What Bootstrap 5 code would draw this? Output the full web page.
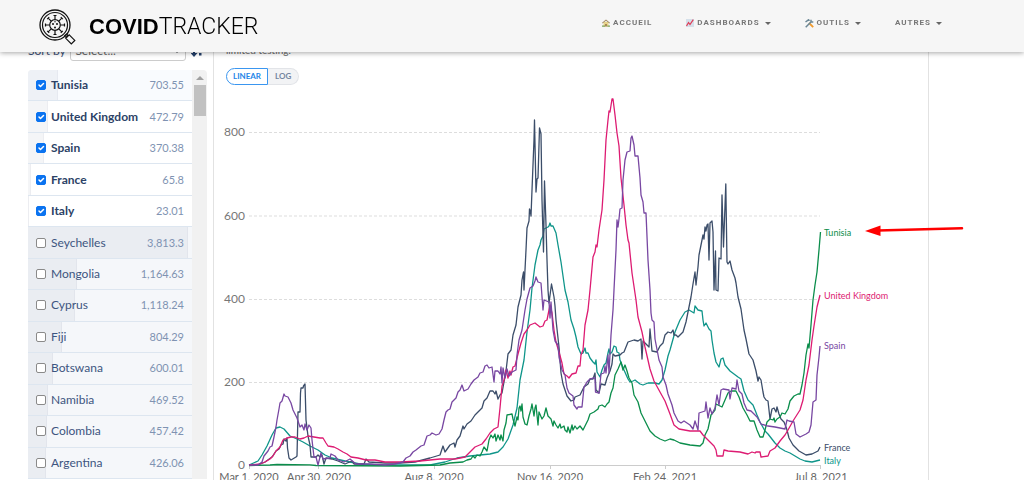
<!DOCTYPE html>
<html lang="fr">
<head>
<meta charset="utf-8">
<meta name="viewport" content="width=device-width, initial-scale=1">
<title>CovidTracker</title>
<link href="https://cdn.jsdelivr.net/npm/bootstrap@5.3.0/dist/css/bootstrap.min.css" rel="stylesheet">
<style>
  body { font-family: Lato, sans-serif; font-size: 12px; line-height: 16px; color: #3d5075; background: #fff; overflow: hidden; }
  .site-bar { height: 52px; padding: 2px 82px 0 39px; background: #f6f6f6; box-shadow: 0 1px 5px rgba(0,0,0,.35); }
  .brand-text { font: 700 22px/26px "Liberation Sans", Arial, sans-serif; color: #000; }
  .brand-text span { font: 300 23px/26px Roboto, sans-serif; }
  .site-menu { gap: 34px; }
  .site-menu .nav-link { display: flex; align-items: center; padding: 0; border: 0; background: none; font: 700 8px/12px Roboto, sans-serif; letter-spacing: 1px; color: #777; }
  .site-menu .nav-link svg { margin-right: 3px; }
  .site-menu .dropdown-toggle::after { margin-left: 5px; border-width: 3px; border-bottom: 0; border-top-color: #666; }
  .explorer { padding: 41px 95px 0 28px; }
  .side { width: 186px; padding-right: 6px; border-right: 1px solid #e2e2e2; }
  .sort-row { height: 20px; margin-bottom: 9px; }
  .sort-row select { width: 116px; height: 20px; padding: 0 4px; border: 1px solid #ccc; border-radius: 3px; font-size: 12px; line-height: 16px; color: #666; background-position: right 4px center; background-size: 8px; }
  .country-box { border-radius: 4px 4px 0 0; overflow: hidden; background: #f1f1f1; }
  .country-list { display: grid; grid-auto-rows: 1fr; height: 409px; width: 164px; }
  .country { position: relative; background: #f5f7fa; border-bottom: 1px solid #dde6f0; padding: 0 8px; }
  .country.picked { background: #fff; }
  .country.picked:first-child { background: #f9fbfe; }
  .country.picked label { font-weight: 700; color: #2c4266; }
  .country label { color: #3d5580; margin-left: 5px; }
  .country output { font-size: 11px; color: #7f93b2; }
  .country > * { position: relative; }
  .country .bar { position: absolute; left: 0; top: 0; bottom: 0; background: rgba(40,60,100,.05); border-right: 1px solid rgba(40,60,100,.04); }
  .country .form-check-input { width: 10px; height: 10px; margin: 0; border-color: #8a8a8a; border-radius: 2px; background-size: 10px; }
  .country .form-check-input:checked { background-color: #0b73f0; border-color: #0b73f0; }
  .scroll-track { width: 15px; padding: 6px 1px 0 2px; }
  .scroll-thumb { height: 31px; margin-top: 5px; background: #c1c1c1; }
  .chart-pane { border-right: 1px solid #e2e2e2; min-width: 0; }
  .chart-note { height: 20px; margin: 0 0 7px 12px; font-size: 10px; line-height: 18px; color: #666; }
  .scale-switch { margin-left: 12px; }
  .scale-switch button { height: 17px; padding: 0 7px; border: 1px solid #e2e4e8; background: #f2f3f5; font-size: 8px; line-height: 15px; font-weight: 700; color: #7385a0; }
  .scale-switch button:first-child { border-color: #3a96f0; background: #fff; color: #2485e8; border-radius: 9px 0 0 9px; padding: 0 6px; }
  .scale-switch button:last-child { border-left: 0; border-radius: 0 9px 9px 0; }
  .plot { display: block; width: 100%; overflow: visible; }
  .plot polyline { fill: none; stroke-width: 1.3; stroke-linejoin: round; }
  .axis { font-size: 12px; fill: #777; }
  .dates { font-size: 11px; fill: #666; text-anchor: middle; }
  .names { font-size: 9px; }
</style>
</head>
<body>
<header class="navbar fixed-top flex-nowrap site-bar">
  <a href="#" class="d-flex align-items-center text-decoration-none">
    <svg width="38" height="36" viewBox="0 0 38 36" fill="none" stroke="#111">
      <circle cx="16" cy="16" r="15" stroke-width="1.300"/><circle cx="16" cy="16" r="12.500" stroke-width="1.200"/>
      <circle cx="16" cy="16" r="5.300" stroke-width="1.200"/>
      <path stroke-width="1.200" d="M16 10.500v-4M16 21.500v4M10.500 16h-4M21.500 16h4M12.200 12.200l-3-3M19.800 12.200l3-3M12.200 19.800l-3 3M19.800 19.800l3 3M14.500 6.500h3M14.500 25.500h3M6.500 14.500v3M25.500 14.500v3M8.200 10.200l2-2M21.800 8.200l2 2M8.200 21.800l2 2M21.800 23.800l2-2"/>
      <g fill="#111" stroke="none"><circle cx="14" cy="15" r="1"/><circle cx="18" cy="15" r="1"/><circle cx="16" cy="18.500" r="1"/><circle cx="16" cy="12.800" r=".7"/></g>
      <path stroke-width="1.200" d="M25.500 27l2-2 1.500 1.500-2 2zM26.800 29.300l3.400-3.400 5.600 5.500-3.500 3.600z"/>
    </svg>
    <span class="brand-text ms-2 ps-1">COVID<span>TRACKER</span></span>
  </a>
  <nav class="d-flex site-menu pb-2">
    <a class="nav-link" href="#"><svg width="8" height="8" viewBox="0 0 8 8"><path fill="#e8d48a" d="M1.500 3h5v4.500h-5z"/><path fill="#a08a60" d="M0 3.800L4 .4l4 3.400-.5.600L4 1.700.5 4.400z"/><path fill="#8c6b42" d="M3.300 5h1.400v2.500H3.300z"/><path fill="#7da35a" d="M0 6.500h3v1.300H0zM5.300 6.500H8v1.300H5.300z"/></svg>ACCUEIL</a>
    <button class="nav-link dropdown-toggle" type="button"><svg width="8" height="8" viewBox="0 0 8 8"><path fill="#d5e0ea" d="M0 0h8v8H0z"/><path fill="none" stroke="#e03a55" stroke-width="1.200" d="M.5 7L2.500 3.500 4 5.500 7.300.7"/></svg>DASHBOARDS</button>
    <button class="nav-link dropdown-toggle" type="button"><svg width="9" height="9" viewBox="0 0 9 9" fill="none"><path stroke="#f09a2c" stroke-width="1.800" d="M4 4l4.200 4.200"/><path stroke="#6b8796" stroke-width="1.500" d="M.7 8.300l6-6M6 .7v2.200h2.300M.5 3L3.500.8l1 1"/></svg>OUTILS</button>
    <button class="nav-link dropdown-toggle" type="button">AUTRES</button>
  </nav>
</header>

<main class="explorer d-flex">
  <section class="side flex-shrink-0">
    <div class="sort-row d-flex align-items-center justify-content-between">
      <label for="sort">Sort by</label>
      <select id="sort" class="form-select"><option>Select...</option></select>
      <svg class="me-1" width="12" height="16" viewBox="0 0 12 16" fill="#24406b"><path d="M2 2h2v8h2.500L3 14-.5 10H2zM8 10h2.500v2.500H8zM7 5h5v2H7z"/></svg>
    </div>
    <div class="country-box d-flex">
      <div class="country-list" id="countries"></div>
      <div class="scroll-track">
        <svg class="d-block mx-auto" width="8" height="4" viewBox="0 0 8 4"><path fill="#a0a0a0" d="M0 4l4-4 4 4z"/></svg>
        <div class="scroll-thumb"></div>
      </div>
    </div>
  </section>

  <section class="chart-pane flex-grow-1">
    <p class="chart-note">limited testing.</p>
    <div class="scale-switch d-flex"><button type="button">LINEAR</button><button type="button">LOG</button></div>
    <svg class="plot" viewBox="214 85 714 400" role="img" aria-label="Daily confirmed cases per million people">
      <path d="M249 132.500H820M249 216H820M249 299.500H820M249 382.500H820" stroke="#ddd" stroke-dasharray="3 2" fill="none"/>
      <path d="M249 465.500H820.500M249.500 465v4M318.500 465v4M434.500 465v4M550.500 465v4M665.500 465v4M820.500 465v4" stroke="#ccc" fill="none"/>
      <g class="axis" text-anchor="end"><text x="245" y="136">800</text><text x="245" y="220">600</text><text x="245" y="303">400</text><text x="245" y="386">200</text><text x="245" y="469">0</text></g>
      <g class="dates"><text x="249" y="481">Mar 1, 2020</text><text x="319" y="481">Apr 30, 2020</text><text x="434" y="481">Aug 8, 2020</text><text x="550" y="481">Nov 16, 2020</text><text x="665" y="481">Feb 24, 2021</text><text x="821" y="481">Jul 8, 2021</text></g>
      <polyline stroke="#0f958a" points="249,465 258,461 262,455 267,446 272,435 276,428 280,427 284,429 290,436 297,439 303,442 310,446 318,450 325,455 332,458 345,461 360,464 380,465 430,465 445,462 457,458 470,456 480,455 490,454 498,452 503,447 508,439 513,425 517,408 520,380 524,360 527,332 530,310 532,288 535,265 538,250 540,245 541,240 543,236 544,229 546,228 548,227 549,226 550,223 551,226 553,226 556,233 558,245 561,262 565,290 568,302 571,320 574,329 576,337 578,347 581,354 583,353 585,348 586,353 588,353 590,358 593,362 595,364 596,360 597,372 600,377 602,370 604,365 606,363 608,353 609,349 610,354 612,352 614,346 616,347 617,352 619,353 620,360 624,370 628,379 630,382 633,381 635,380 640,384 643,385 648,383 655,383 659,384 662,380 665,370 668,356 670,350 675,332 680,320 685,312 689,310 694,313 695,306 698,310 702,311 703,320 704,326 706,323 709,329 711,331 712,340 714,353 716,362 719,367 721,359 723,358 725,365 730,371 738,377 741,379 744,391 748,400 753,405 757,415 760,422 765,431 768,434 775,443 780,448 785,451 790,453 795,456 800,459 805,461 812,462 816,461 820,460"/>
      <polyline stroke="#3b4d69" points="249,465 258,465 265,462 272,457 276,451 279,449 281,445 283,444 284,439 286,441 287,438 287.500,448 289,458 291,460 296,457 297,456 298,412 300,412 300.500,393 301,388 303,388 303.500,386 305,384 306,420 308,436 310,445 311,457 316,457 318,455 320,457 322,455 324,464 326,458 332,459 338,461 345,464 352,461 354,464 364,464 366,459 369,462 385,463 400,463 415,462 430,458 440,455 443,446 445,452 450,445 454,443 455,447 457,440 460,436 463,426 464,429 467,424 471,421 475,415 479,411 482,408 484,401 487,398 490,391 493,391 495,394 496,391 498,399 500,395 502,393 504,382 506,371 508,354 511,350 513,335 516,325 518,307 521,295 522,280 523.500,272 524,290 526,250 527,228 529,221 529.500,209 530.500,212 531,216 532,190 534,140 534.500,120 536,192 537,179 538,178 539.500,128 541,134 542,200 543.500,252 544.500,181 546,225 547,260 548,290 549,303 551.500,284 554,297 555,306 556,320 559,347 561,373 563,384 567,396 571,401 574,400 575,397 580,395 584,387 588,384 590,379 593,379 595,373 596,390 599,393 601,384 605,385 607,378 610,371 612,364 613,354 615,356 620,355 622,353 624,352 628,342 634,340 638,341 641,339 642,359 643,341 647,345 649,347 650,329 652,351 657,352 660,346 663,343 665,335 668,332 671,333 673,330 674,335 676,335 678,337 681,334 683,332 686,322 688,312 691,297 693,284 695,272 696,285 698,267 699,255 701,245 703,235 704,239 705,227 706,231 707,225 708,224 709,260 710,223 712,221 713,232 714,290 715.500,251 716,290 718,291 719,258 721,259 722,195 723.500,247 725.800,184 727,262 728,264 730,261 732,270 735,278 736,283 738,297 741,309 744,330 746,339 749,354 753,360 756,371 758,381 759,377 761,380 763,392 764,397 766,400 768,401 770,419 772,409 774,408 776,412 777,407 779,414 781,419 784,422 786,427 787,430 789,438 793,445 799,451 806,455 812,454 818,451 820,447"/>
      <polyline stroke="#0a8d4b" points="249,465.500 270,465 277,464.500 310,464.800 316,465.500 400,466 440,465 450,463 463,462 467,460 471,459 473,456 475,458 477,455 480,456 482,452 484,447 487,451 489,440 491,435 493,438 495,434 496,441 498,435 500,440 501,435 503,441 504,430 506,423 507,415 512,414 513,419 515,426 517,417 518,420 519,408 520,406 521,411 522,404 523,417 525,424 527,425 529,416 531,409 532,404 534,416 535,408 536,405 538,425 539,412 542,419 544,416 546,408 548,416 551,419 553,426 554,421 556,425 558,428 560,424 561,428 564,426 565,430 567,432 568,427 570,433 572,425 573,430 575,426 577,429 580,426 583,430 586,424 588,420 590,414 594,412 598,409 599,406 602,405 605,407 607,404 609,402 611,393 613,388 615,375 618,369 621,362 623,370 625,365 627,371 629,378 632,383 634,395 638,402 641,413 646,423 650,431 655,436 660,439 665,441 670,439 674,440 680,443 690,445 700,446 703,443 705,435 708,429 711,415 715,410 716,404 722,407 725,400 728,393 731,391 736,391 739,397 743,408 747,415 750,421 754,421 757,430 760,437 763,437 765,430 767,422 770,419 773,420 774,418 775,422 777,419 780,417 782,413 785,414 788,409 790,401 794,396 798,394 800,394 802,385 804,373 806,355 808,344 809,348 811,325 813,300 815,285 817,272 819,250 820.500,232"/>
      <polyline stroke="#dd1b72" points="249,465 260,464 265,462 270,459 273,456 276,451 280,447 283,440 287,438 291,437 295,437 300,439 304,438 308,436 314,437 320,438 323,438 326,443 328,446 334,447 338,449 343,452 347,454 351,457 358,458 366,460 375,460 385,462 400,462 420,461 440,459 455,459 465,457 470,452 475,447 482,444 486,439 490,433 494,429 498,427 500,408 502,386 504,380 506,370 508,378 510,371 511,375 513,367 515,366 518,354 521,343 524,334 527,330 530,325 535,323 540,327 543,326 545,321 547,320 550,305 552,313 554,330 556,342 559,352 562,363 564,374 567,376 569,378 572,374 576,373 578,366 580,366 581,355 583,350 585,325 588,310 590,290 593,257 595,252 596,245 597,247 599,230 602,210 604,180 606,140 608,120 609,111 610,112 612,99 613,99 615,115 617,133 619,146 621,178 624,205 626,225 628,240 629,243 632,273 636,300 638,317 642,332 645,347 650,369 654,381 660,392 665,401 670,414 674,425 679,429 690,431 700,431 703,435 706,438 710,442 714,446 716,450 717,456 723,456 724,450 728,451 740,452 748,454 752,452 755,453 756,452 760,452 761,457 768,456 770,451 775,448 780,441 785,435 788,430 793,421 800,410 803,400 806,380 809,365 812,340 814,326 817,307 820,295"/>
      <polyline stroke="#7847a2" points="249,465 258,465 262,462 264,456 268,451 270,447 272,446 274,437 276,427 277,420 279,409 280,403 282,401 284,394 285,396 288,397 291,403 293,410 297,418 300,427 302,425 304,430 305,424 307,430 309,425 311,428 312,440 314,457 316,457 318,465 321,453 323,459 330,458 331,454 335,456 338,460 344,462 350,459 356,464 370,464 385,465 395,464 403,462 406,458 410,456 413,452 416,450 421,446 424,445 427,436 430,435 432,433 436,435 439,434 442,429 444,420 446,412 448,410 450,409 452,402 456,398 458,392 460,390 462,385 464,391 468,389 471,384 474,380 478,377 480,373 483,372 485,366 487,365 489,368 492,367 494,382 495,371 498,371 500,374 501,367 502,383 503,368 505,378 507,369 509,376 512,372 516,370 517,355 519,340 522,330 525,310 527,299 530,288 533,286 535,281 536,277 538,282 541,283 543,310 544,300 549,302 550,318 551,302 553,330 555,341 558,345 559,357 562,370 565,375 567,388 569,393 573,396 574,405 577,409 578,407 582,407 584,387 587,382 590,379 593,378 595,378 595.500,392 599,393 601,374 604,373 605,366 606,373 608,355 609,373 611,335 613,310 614,290 616,250 617,220 618,227 619,219 620,209 622,208 623,180 625,160 627,152 630,151 631,138 632,136 634,145 635,156 638,156 640,178 641,195 643,202 644,213 646,213 648,260 650,290 651,313 652,320 654,322 655,339 659,360 662,367 663,377 666,385 668,394 672,405 674,413 678,421 681,423 684,421 690,425 693,429 695,421 698,430 699,413 705,411 706,402 708,418 710,408 712,414 715,408 717,395 719,405 721,390 723,389 729,390 730,399 732,388 736,389 737,380 739,391 742,394 744,403 747,410 751,411 757,417 761,424 768,426 775,427 785,429 787,420 789,421 794,422 796,434 800,437 806,434 809,432 811,425 813,402 816,400 817,375 819,357 820,346"/>
      <g class="names"><text x="824" y="236" fill="#0a8d4b">Tunisia</text><text x="824" y="299" fill="#dd1b72">United Kingdom</text><text x="824" y="349" fill="#7847a2">Spain</text><text x="824" y="451" fill="#3b4d69">France</text><text x="824" y="464" fill="#0f958a">Italy</text></g>
      <path d="M878 230.500L962 228.300" stroke="#f00" stroke-width="2.500" stroke-linecap="round"/><path fill="#f00" d="M865 231l15.500-5.500V236z"/>
    </svg>
  </section>
</main>

<script src="https://cdn.jsdelivr.net/npm/bootstrap@5.3.0/dist/js/bootstrap.bundle.min.js"></script>
<script>
  const SCALE_MAX = 3900;
  const data = [["Tunisia","703.55",1],["United Kingdom","472.79",1],["Spain","370.38",1],["France","65.8",1],["Italy","23.01",1],
    ["Seychelles","3,813.3"],["Mongolia","1,164.63"],["Cyprus","1,118.24"],["Fiji","804.29"],["Botswana","600.01"],["Namibia","469.52"],["Colombia","457.42"],["Argentina","426.06"]];
  document.getElementById("countries").innerHTML = data.map(([name, value, on], i) => {
    const width = parseFloat(value.replace(",", "")) / SCALE_MAX * 100;
    return `<div class="country d-flex align-items-center${on ? " picked" : ""}"><span class="bar" style="width:${width}%"></span>
      <input class="form-check-input" type="checkbox" id="c${i}"${on ? " checked" : ""}><label for="c${i}">${name}</label><output class="ms-auto" for="c${i}">${value}</output></div>`;
  }).join("");
</script>
</body>
</html>
